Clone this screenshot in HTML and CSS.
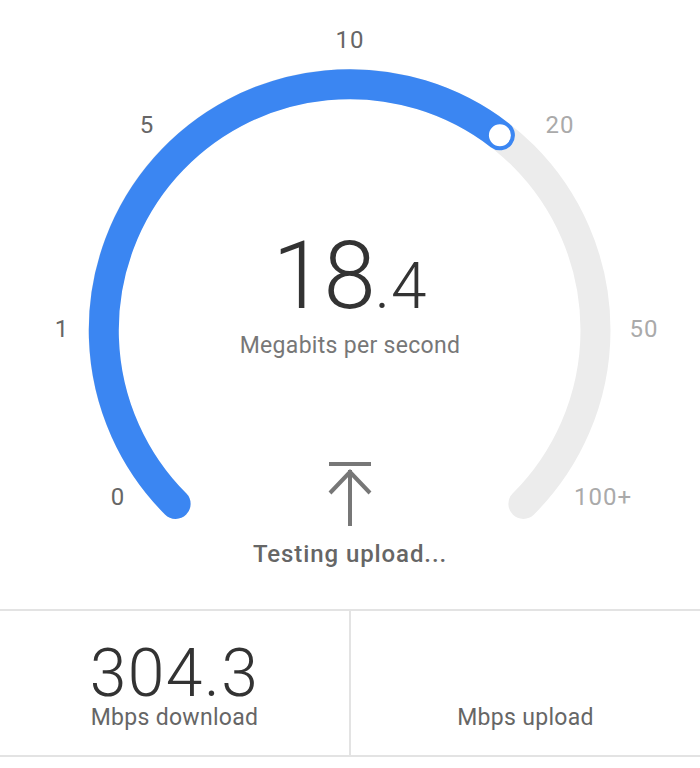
FILE: index.html
```html
<!DOCTYPE html>
<html lang="en">
<head>
  <meta charset="UTF-8">
  <title>Speed Test</title>
  <link rel="stylesheet" href="styles.css">
</head>
<body>
  <div class="gauge">
    <svg class="dial" width="700" height="609" viewBox="0 0 700 609">
      <path class="track" d="M175.6 503.9 A246 246 0 1 1 523.4 503.9"/>
      <path class="fill" d="M175.6 503.9 A246 246 0 0 1 499.9 135.3"/>
      <circle class="knob" cx="499.9" cy="135.3" r="12"/>
      <text class="tick passed" x="118" y="497">0</text>
      <text class="tick passed" x="62" y="329">1</text>
      <text class="tick passed" x="147" y="125">5</text>
      <text class="tick passed" x="350" y="40">10</text>
      <text class="tick" x="560" y="125">20</text>
      <text class="tick" x="644" y="329">50</text>
      <text class="tick" x="603" y="497">100+</text>
    </svg>

    <div class="readout">
      <div class="speed">18<span class="decimal">.4</span></div>
      <div class="unit">Megabits per second</div>
    </div>

    <div class="status">
      <svg class="upload-icon" width="48" height="68" viewBox="0 0 48 68">
        <line x1="3" y1="4" x2="45" y2="4"/>
        <line x1="24" y1="10" x2="24" y2="66"/>
        <polyline points="4,33 24,12 44,33"/>
      </svg>
      <div class="status-text">Testing upload...</div>
    </div>
  </div>

  <div class="results">
    <div class="result">
      <div class="result-value">304.3</div>
      <div class="result-label">Mbps download</div>
    </div>
    <div class="result">
      <div class="result-value"></div>
      <div class="result-label">Mbps upload</div>
    </div>
  </div>
</body>
</html>
```

FILE: styles.css
```css
body {
  margin: 0;
  background: #fff;
  font-family: Roboto, "Liberation Sans", sans-serif;
  color: #333;
}

.gauge {
  position: relative;
  height: 609px;
  display: flex;
  flex-direction: column;
  align-items: center;
}
.dial {
  position: absolute;
  left: 0;
  top: 0;
}
.track, .fill {
  fill: none;
  stroke-width: 30;
  stroke-linecap: round;
}
.track { stroke: #ececec; }
.fill { stroke: #3b86f2; }
.knob {
  fill: #fff;
  stroke: #3b86f2;
  stroke-width: 2;
}
.tick {
  font-family: Roboto, "Liberation Sans", sans-serif;
  font-size: 24px;
  letter-spacing: 1px;
  fill: #aaa;
  text-anchor: middle;
  dominant-baseline: central;
}
.tick.passed { fill: #666; }

.readout {
  position: relative;
  margin-top: 230px;
  display: flex;
  flex-direction: column;
  align-items: center;
}
.speed {
  font-size: 94px;
  font-weight: 300;
  line-height: 92px;
  color: #333;
  letter-spacing: -1px;
}
.decimal {
  font-size: 64px;
  letter-spacing: 1px;
}
.unit {
  font-size: 23px;
  letter-spacing: 0.3px;
  line-height: 26px;
  color: #777;
}

.status {
  position: relative;
  margin-top: 101px;
  display: flex;
  flex-direction: column;
  align-items: center;
}
.upload-icon {
  fill: none;
  stroke: #777;
  stroke-width: 4;
}
.status-text {
  margin-top: 12px;
  font-size: 24px;
  font-weight: 500;
  letter-spacing: 0.9px;
  line-height: 28px;
  color: #666;
}

.results {
  display: flex;
  border-top: 2px solid #e3e3e3;
  border-bottom: 2px solid #e3e3e3;
}
.result {
  flex: 1;
  height: 144px;
  display: flex;
  flex-direction: column;
  align-items: center;
  padding-top: 32px;
  box-sizing: border-box;
}
.result + .result { border-left: 2px solid #e3e3e3; }
.result-value {
  height: 62px;
  font-size: 66px;
  font-weight: 300;
  line-height: 62px;
  letter-spacing: 1.5px;
  color: #333;
}
.result-label {
  font-size: 23px;
  letter-spacing: 0.3px;
  line-height: 26px;
  color: #666;
}
```
